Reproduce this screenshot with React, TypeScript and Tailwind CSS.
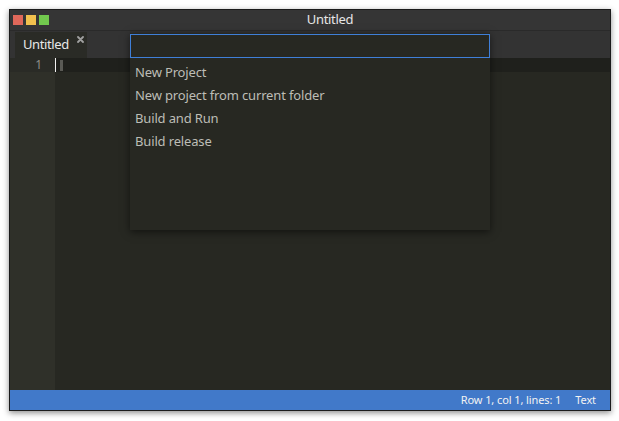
import React from "react";

export default function App() {
  const font = { fontFamily: '"Noto Sans", "Open Sans", sans-serif' };
  return (
    <div className="w-[619px] h-[421px] bg-white pt-[9px] pl-[9px]" style={font}>
      <div className="relative w-[602px] h-[402px] flex flex-col border border-[#1c1c1c] shadow-[0_2px_6px_rgba(0,0,0,0.45)] bg-[#272822]">
        {/* title bar */}
        <div className="relative h-[21px] bg-[#353535] border-b border-[#2a2a2a] flex items-center">
          <div className="flex gap-[3px] pl-[3px]">
            <div className="w-[10px] h-[10px] bg-[#e0685a]" />
            <div className="w-[10px] h-[10px] bg-[#f2c14e]" />
            <div className="w-[10px] h-[10px] bg-[#72c94e]" />
          </div>
          <div className="absolute inset-0 pl-[40px] flex items-center justify-center text-[13px] tracking-[-0.3px] text-[#e6e6e6]">Untitled</div>
        </div>
        {/* tab bar */}
        <div className="h-[27px] bg-[#333333] flex items-end pl-[5px]">
          <div className="relative w-[72px] h-[26px] bg-[#2a2b26] flex items-center pl-[8px] text-[13px] tracking-[-0.4px] text-[#e8e8e8]">
            Untitled
            <svg className="absolute left-[62px] top-[4px]" width="7" height="7" viewBox="0 0 7 7">
              <path d="M1 1L6 6M6 1L1 6" stroke="#a0a0a0" strokeWidth="1.8" strokeLinecap="round" />
            </svg>
          </div>
        </div>
        {/* editor */}
        <div className="flex-1 flex">
          <div className="w-[45px] bg-[#2f3029] flex flex-col">
            <div className="h-[14px] bg-[#2a2b26] flex items-center justify-end pr-[13px] text-[12px] text-[#8f908a]">1</div>
          </div>
          <div className="flex-1 flex flex-col">
            <div className="h-[14px] bg-[#1f201c] flex items-center">
              <div className="w-[1px] h-[14px] bg-[#f0f0f0]" />
              <div className="ml-[4px] w-[3px] h-[11px] bg-[#5a5a55]" />
            </div>
          </div>
        </div>
        {/* status bar */}
        <div className="h-[20px] bg-[#4179c9] flex items-center justify-end gap-[14px] pr-[14px] text-[11px] tracking-[-0.1px] text-[#f2f2f2]">
          <span>Row 1, col 1, lines: 1</span>
          <span>Text</span>
        </div>
        {/* command palette */}
        <div className="absolute left-[120px] top-[23px] w-[360px] h-[197px] bg-[#272822] shadow-[0_2px_8px_rgba(0,0,0,0.55)] pt-[1px]">
          <div className="h-[24px] border border-[#3f7fd8] bg-[#272822]" />
          <div className="flex flex-col pl-[5px] pt-[3px] text-[13px] tracking-[-0.15px] text-[#bdbdb6]">
            <div className="h-[23px] flex items-center">New Project</div>
            <div className="h-[23px] flex items-center">New project from current folder</div>
            <div className="h-[23px] flex items-center">Build and Run</div>
            <div className="h-[23px] flex items-center">Build release</div>
          </div>
        </div>
      </div>
    </div>
  );
}
